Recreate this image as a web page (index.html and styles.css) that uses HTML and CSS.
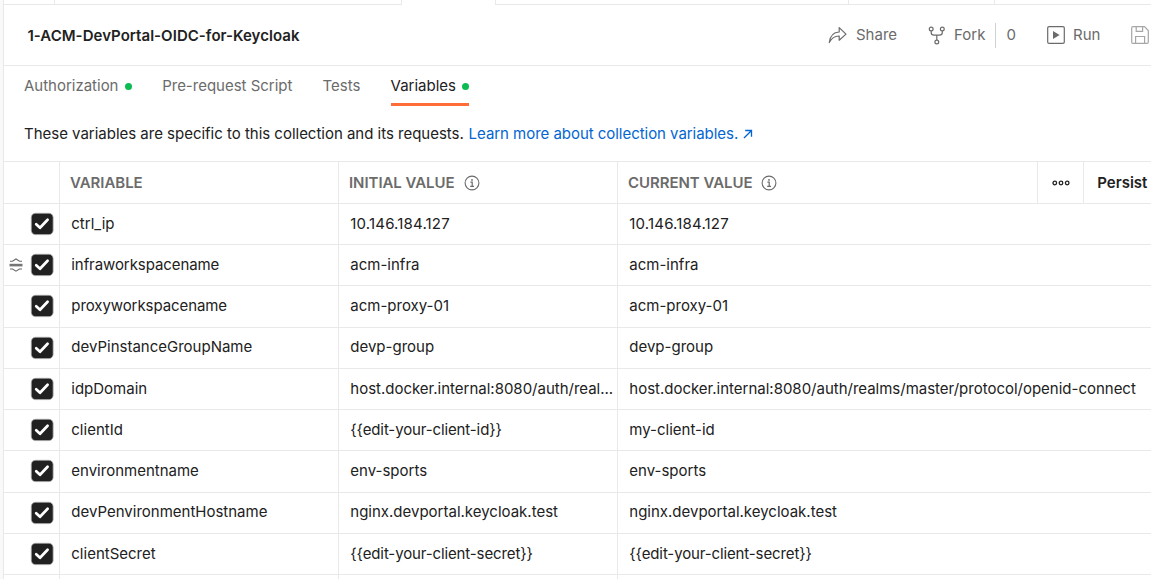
FILE: index.html
```html
<!DOCTYPE html>
<html lang="en">
<head>
<meta charset="utf-8">
<title>Collection variables</title>
<link rel="stylesheet" href="styles.css">
</head>
<body>
<svg class="defs" width="0" height="0">
  <symbol id="check" viewBox="0 0 24 24">
    <rect x="1.300" y="1.300" width="21.800" height="21.300" rx="4.200" fill="#212121" stroke="#a6a6a6" stroke-width=".8"/>
    <path d="M6.200 12.200 10 15.800 17.600 7.800" fill="none" stroke="#fff" stroke-width="2.700" stroke-linecap="round" stroke-linejoin="round"/>
  </symbol>
  <symbol id="info" viewBox="0 0 16 16">
    <circle cx="8" cy="8" r="6.900" fill="none" stroke="#6b6b6b" stroke-width="1.100"/>
    <path d="M6.400 7.200H8.200V11.200M6.200 11.300H10" fill="none" stroke="#6b6b6b" stroke-width="1.200"/>
    <circle cx="8" cy="4.900" r=".9" fill="#6b6b6b"/>
  </symbol>
</svg>
<div class="app">
  <div class="gutter"></div>
  <main class="pane">
    <div class="tabstrip"><i class="t1"></i><i class="t2"></i><i class="t3 on"></i><i class="t4"></i><i class="t5"></i><i class="t6"></i></div>
    <header class="head">
      <h1 class="title">1-ACM-DevPortal-OIDC-for-Keycloak</h1>
      <div class="actions">
        <span class="action share"><svg width="20" height="18" viewBox="0 0 20 18"><path d="M1.300 16.500C2 10 5.200 6.300 11.200 6V1.600L18 8.100 11.200 14.200V10C6.500 9.900 3.600 12 1.300 16.500Z" fill="none" stroke="#6b6b6b" stroke-width="1.200" stroke-linejoin="round"/></svg><span>Share</span></span>
        <span class="action fork"><svg width="18" height="19" viewBox="0 0 18 19"><g fill="none" stroke="#6b6b6b" stroke-width="1.200"><circle cx="3.200" cy="3" r="1.900"/><circle cx="14.300" cy="3" r="1.900"/><circle cx="8.800" cy="16" r="1.900"/><path d="M3.200 5V6.500Q3.200 9.200 6 9.200H11.500Q14.300 9.200 14.300 6.500V5M8.800 9.200V14"/></g></svg><span>Fork</span></span>
        <span class="count">0</span>
        <span class="action run"><svg width="18" height="18" viewBox="0 0 18 18"><rect x=".7" y=".7" width="16.600" height="16.600" rx="1.300" fill="none" stroke="#6b6b6b" stroke-width="1.200"/><path d="M6 5 12.600 9 6 13Z" fill="#6b6b6b"/></svg><span>Run</span></span>
        <span class="action save"><svg width="18" height="18" viewBox="0 0 18 18"><path d="M.7 2Q.7.700 2 .700H13.500L17.300 4.500V16Q17.300 17.300 16 17.300H2Q.7 17.300.7 16ZM5.200.700V5.300H11.600V.700M4.600 17.300V10.500H13.600V17.300" fill="none" stroke="#a6a6a6" stroke-width="1.200"/></svg></span>
      </div>
    </header>
    <nav class="nav">
      <span class="tab">Authorization<b></b></span>
      <span class="tab">Pre-request Script</span>
      <span class="tab">Tests</span>
      <span class="tab active">Variables<b></b></span>
    </nav>
    <p class="desc"><span>These variables are specific to this collection and its requests.</span><a>Learn more about collection variables.</a><svg width="10" height="10" viewBox="0 0 10 10"><path d="M1 9 8.300 1.700M2.200 1.500H8.500V7.800" fill="none" stroke="#0265d2" stroke-width="1.300"/></svg></p>
    <section class="table">
      <div class="row header">
        <div></div><div>VARIABLE</div>
        <div>INITIAL VALUE<svg class="info" width="16" height="16"><use href="#info"/></svg></div>
        <div>CURRENT VALUE<svg class="info" width="16" height="16"><use href="#info"/></svg></div>
        <div class="more"><svg width="18" height="6" viewBox="0 0 18 6"><g fill="none" stroke="#212121" stroke-width="1.300"><circle cx="2.800" cy="3" r="1.800"/><circle cx="9" cy="3" r="1.800"/><circle cx="15.200" cy="3" r="1.800"/></g></svg></div>
        <div class="persist">Persist</div>
      </div>
      <div class="row"><div class="sel"><svg width="24" height="24"><use href="#check"/></svg></div><div><span>ctrl_ip</span></div><div><span class="num">10.146.184.127</span></div><div><span class="num">10.146.184.127</span></div></div>
      <div class="row"><div class="sel"><svg class="drag" width="14" height="16" viewBox="0 0 14 16"><path d="M.5 8.100H13.500" stroke="#757575" stroke-width="2.600"/><path d="M1 4.300H3.500L7 2 10.500 4.300H13M1 12H3.500L7 14.200 10.500 12H13" fill="none" stroke="#6b6b6b" stroke-width="1.100"/></svg><svg width="24" height="24"><use href="#check"/></svg></div><div><span class="snug">infraworkspacename</span></div><div><span>acm-infra</span></div><div><span>acm-infra</span></div></div>
      <div class="row"><div class="sel"><svg width="24" height="24"><use href="#check"/></svg></div><div><span class="snug">proxyworkspacename</span></div><div><span>acm-proxy-01</span></div><div><span>acm-proxy-01</span></div></div>
      <div class="row"><div class="sel"><svg width="24" height="24"><use href="#check"/></svg></div><div><span>devPinstanceGroupName</span></div><div><span>devp-group</span></div><div><span>devp-group</span></div></div>
      <div class="row"><div class="sel"><svg width="24" height="24"><use href="#check"/></svg></div><div><span>idpDomain</span></div><div><span class="url">host.docker.internal:8080/auth/real...</span></div><div><span class="url">host.docker.internal:8080/auth/realms/master/protocol/openid-connect</span></div></div>
      <div class="row"><div class="sel"><svg width="24" height="24"><use href="#check"/></svg></div><div><span>clientId</span></div><div><span class="brace">{{edit-your-client-id}}</span></div><div><span>my-client-id</span></div></div>
      <div class="row"><div class="sel"><svg width="24" height="24"><use href="#check"/></svg></div><div><span>environmentname</span></div><div><span>env-sports</span></div><div><span>env-sports</span></div></div>
      <div class="row"><div class="sel"><svg width="24" height="24"><use href="#check"/></svg></div><div><span>devPenvironmentHostname</span></div><div><span>nginx.devportal.keycloak.test</span></div><div><span>nginx.devportal.keycloak.test</span></div></div>
      <div class="row"><div class="sel"><svg width="24" height="24"><use href="#check"/></svg></div><div><span>clientSecret</span></div><div><span class="brace">{{edit-your-client-secret}}</span></div><div><span class="brace">{{edit-your-client-secret}}</span></div></div>
      <div class="row"><div></div><div></div><div></div><div></div></div>
    </section>
  </main>
</div>
</body>
</html>
```
FILE: styles.css
```css
* { box-sizing: border-box; }
body { margin: 0; background: #fff; color: #212121; font: 15px/20px Inter, sans-serif; white-space: nowrap; }
.defs { display: block; }
svg { flex: none; }
.app { display: flex; width: 1151px; height: 579px; overflow: hidden; }
.gutter { flex: none; width: 4px; background: #f9f9f9; border-right: 1px solid #e9e9e9; }
.pane { flex: 1; min-width: 0; display: flex; flex-direction: column; }
.tabstrip { flex: none; display: flex; height: 5px; }
.tabstrip i { border-right: 1px solid #e9e9e9; border-bottom: 1px solid #e9e9e9; }
.tabstrip .on { border-bottom: 0; }
.t1 { width: 51px; } .t2 { width: 347px; } .t3 { width: 94px; } .t4 { width: 353px; } .t5 { width: 146px; }
.tabstrip .t6 { flex: 1; border-right: 0; }
.head { flex: none; display: flex; align-items: center; justify-content: space-between; height: 61px; border-bottom: 1px solid #e9e9e9; padding-left: 23.4px; }
.title { margin: 0; padding-top: 2px; font-size: 15px; font-weight: 600; line-height: 20px; letter-spacing: .04px; }
.actions { display: flex; align-items: center; color: #6b6b6b; padding-right: 2px; }
.action { display: flex; align-items: center; }
.share { width: 100px; gap: 8px; }
.fork { width: 67px; gap: 8px; }
.count { width: 52px; height: 25px; line-height: 24px; padding-left: 10.5px; border-left: 1px solid #d0d0d0; }
.run { width: 84px; gap: 8px; }
.nav { flex: none; display: flex; height: 40px; color: #6b6b6b; padding-left: 20px; gap: 30.2px; letter-spacing: -.01px; }
.tab { display: flex; align-items: center; }
.tab b { width: 7px; height: 7px; margin: 1px 0 0 6.5px; border-radius: 50%; background: #0cbb52; }
.active { color: #212121; box-shadow: inset 0 -3px #ff6c37; }
.desc { flex: none; margin: 0; height: 55px; padding-left: 20px; display: flex; align-items: center; letter-spacing: -.015px; }
.desc a { color: #0265d2; margin: 0 5px 0 4.8px; letter-spacing: -.04px; }
.table { display: grid; grid-template-rows: 42px repeat(10, 41.22px); border-top: 1px solid #e9e9e9; }
.row { display: grid; grid-template-columns: 55px 279px 279px 1fr; border-bottom: 1px solid #e9e9e9; }
.row > div { display: flex; align-items: center; min-width: 0; padding: 0 0 .6px 11.3px; border-left: 1px solid #e9e9e9; }
.row > div:first-child { border-left: 0; }
.header { grid-template-columns: 55px 279px 279px 420px 46px 1fr; color: #6b6b6b; font-weight: 600; letter-spacing: -.05px; }
.header > div { padding: 1px 0 0 10px; }
.row.header > div { padding: 1px 0 0 10px; }
.row > .sel { justify-content: flex-end; padding: 0 4.700px .2px 0; }
.drag { margin-right: 7.500px; }
.info { margin-left: 9px; }
.row.header > .more { padding: 1px 0 0; justify-content: center; }
.row.header > .persist { color: #212121; padding-left: 13.300px; letter-spacing: 0; }
.num { letter-spacing: .17px; }
.snug { letter-spacing: -.08px; }
.url { letter-spacing: -.01px; }
.brace { letter-spacing: -.12px; }
```
